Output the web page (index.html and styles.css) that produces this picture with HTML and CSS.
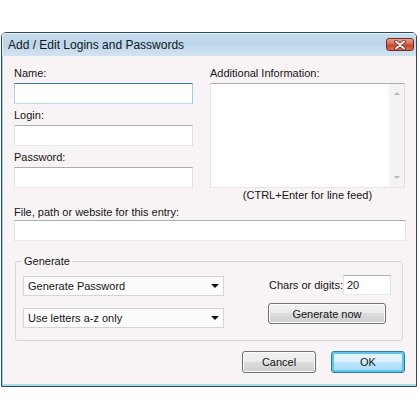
FILE: index.html
```html
<!DOCTYPE html>
<html lang="en">
<head>
  <meta charset="UTF-8">
  <title>Add / Edit Logins and Passwords</title>
  <link rel="stylesheet" href="styles.css">
</head>
<body>
  <div class="window">
    <div class="titlebar">
      <span class="title">Add / Edit Logins and Passwords</span>
      <span class="close">
        <svg width="14" height="10" viewBox="0 0 14 10">
          <path d="M3 1.5 L11 8.5 M11 1.5 L3 8.5" stroke="#6b1d12" stroke-width="3.6" stroke-linecap="round"/>
          <path d="M3 1.5 L11 8.5 M11 1.5 L3 8.5" stroke="#fff" stroke-width="2" stroke-linecap="round"/>
        </svg>
      </span>
    </div>

    <div class="client">
      <div class="top">
        <div class="col-left">
          <label class="lbl">Name:</label>
          <div class="edit focus"></div>
          <label class="lbl">Login:</label>
          <div class="edit"></div>
          <label class="lbl">Password:</label>
          <div class="edit"></div>
        </div>
        <div class="col-right">
          <label class="lbl">Additional Information:</label>
          <div class="memo">
            <div class="memo-text"></div>
            <div class="vscroll">
              <span class="arr up"></span>
              <span class="arr down"></span>
            </div>
          </div>
          <div class="hint">(CTRL+Enter for line feed)</div>
        </div>
      </div>

      <label class="lbl file-lbl">File, path or website for this entry:</label>
      <div class="edit"></div>

      <!-- Generate group -->
      <fieldset class="group">
        <legend>Generate</legend>
        <div class="group-body">
          <div class="combos">
            <div class="combo"><span>Generate Password</span><i class="caret"></i></div>
            <div class="combo"><span>Use letters a-z only</span><i class="caret"></i></div>
          </div>
          <div class="gen">
            <div class="chars">
              <span class="chars-lbl">Chars or digits:</span>
              <div class="edit num">20</div>
            </div>
            <button class="btn gen-btn">Generate now</button>
          </div>
        </div>
      </fieldset>

      <div class="actions">
        <button class="btn">Cancel</button>
        <button class="btn default">OK</button>
      </div>
    </div>
  </div>
</body>
</html>
```

FILE: styles.css
```css
html, body {
  margin: 0;
  padding: 0;
  background: #fff;
}
body {
  font-family: "Liberation Sans", Arial, sans-serif;
  font-size: 11px;
  color: #151515;
}
/* Окно диалога */
.window {
  margin: 32px 0 0 1px;
  width: 416px;
  height: 355px;
  box-sizing: border-box;
  border: 1px solid #2c4c5e;
  border-radius: 5px 5px 0 0;
  display: flex;
  flex-direction: column;
  overflow: hidden;
}
.titlebar {
  flex: none;
  height: 23px;
  display: flex;
  align-items: center;
  justify-content: space-between;
  padding: 0 2px 0 6px;
  background: linear-gradient(180deg, #c6dcee 0%, #bed5ea 50%, #d2e4f2 100%);
  box-shadow: inset 1px 1px 0 #e6f1fa;
}
.title {
  font-size: 12px;
  color: #101820;
}
.close {
  width: 28px;
  height: 13px;
  box-sizing: border-box;
  border: 1px solid #7a2a22;
  border-radius: 3px;
  background: linear-gradient(180deg, #e8a093 0%, #d66a58 45%, #c4412d 55%, #d9705c 100%);
  display: flex;
  align-items: center;
  justify-content: center;
}
.client {
  flex: 1;
  background: #f8f3f5;
  padding: 10px 10px 0 12px;
  box-shadow: inset 1px 0 0 #9fd4e2, inset 0 -2px 0 #a9dde8;
}
.top {
  display: flex;
  gap: 17px;
}
.col-left {
  width: 179px;
}
.col-right {
  width: 195px;
}
.lbl {
  display: block;
  line-height: 15px;
  margin-bottom: 2px;
}
.edit {
  height: 21px;
  box-sizing: border-box;
  background: #fff;
  border: 1px solid;
  border-color: #abadb3 #dbdfe6 #e3e9ef #e2e3ea;
  margin-bottom: 4px;
}
.edit.focus {
  border-color: #3d7bad #a4c9e3 #b7d9ed #b5cfe7;
}
.memo {
  height: 105px;
  box-sizing: border-box;
  display: flex;
  background: #fff;
  border: 1px solid;
  border-color: #abadb3 #dbdfe6 #e3e9ef #e2e3ea;
}
.memo-text {
  flex: 1;
}
.vscroll {
  width: 15px;
  background: #f4f2f3;
  display: flex;
  flex-direction: column;
  justify-content: space-between;
  align-items: center;
  padding: 8px 0;
}
.arr {
  width: 0;
  height: 0;
  border-left: 3px solid transparent;
  border-right: 3px solid transparent;
}
.arr.up {
  border-bottom: 3px solid #b9b9b9;
}
.arr.down {
  border-top: 3px solid #b9b9b9;
}
.hint {
  line-height: 15px;
  text-align: center;
}
.file-lbl {
  margin-top: 2px;
  margin-bottom: 0;
}
/* Группа Generate */
.group {
  margin: 13px 3px 0 1px;
  padding: 7px 0 12px 7px;
  border: 1px solid #d8d6d8;
  border-radius: 3px;
  min-width: 0;
}
.group legend {
  padding: 0 2px;
  margin-left: -1px;
  line-height: 15px;
}
.group-body {
  display: flex;
  gap: 44px;
}
.combos {
  flex: none;
  width: 201px;
  display: flex;
  flex-direction: column;
  gap: 12px;
}
.combo {
  height: 20px;
  box-sizing: border-box;
  border: 1px solid #d4d4d4;
  background: #fdfcfd;
  display: flex;
  align-items: center;
  justify-content: space-between;
  padding: 0 4px 0 4px;
}
.caret {
  width: 0;
  height: 0;
  border-left: 4px solid transparent;
  border-right: 4px solid transparent;
  border-top: 4px solid #111;
}
.gen {
  flex: none;
  display: flex;
  flex-direction: column;
  gap: 8px;
  margin-top: -1px;
}
.chars {
  display: flex;
  align-items: center;
  padding-left: 1px;
}
.chars-lbl {
  flex: none;
  width: 74px;
  white-space: nowrap;
}
.edit.num {
  width: 48px;
  height: 20px;
  margin: 0;
  padding-left: 3px;
  line-height: 18px;
}
.btn {
  font-family: inherit;
  font-size: 11px;
  color: #151515;
  height: 21px;
  padding: 0;
  border: 1px solid #707070;
  border-radius: 3px;
  background: linear-gradient(180deg, #f2f2f2 0%, #ebebeb 50%, #dddddd 50%, #cfcfcf 100%);
  box-shadow: inset 0 0 0 1px #fbfbfb;
}
.gen-btn {
  width: 118px;
}
.actions {
  display: flex;
  justify-content: flex-end;
  gap: 15px;
  margin: 10px 1px 0 0;
}
.actions .btn {
  width: 74px;
  height: 22px;
}
.btn.default {
  border-color: #2a7fa8;
  background: linear-gradient(180deg, #eaf6fd 0%, #d9f0fc 50%, #bee6fd 50%, #a7d9f5 100%);
  box-shadow: inset 0 0 0 2px #5ec3e6;
}
```
